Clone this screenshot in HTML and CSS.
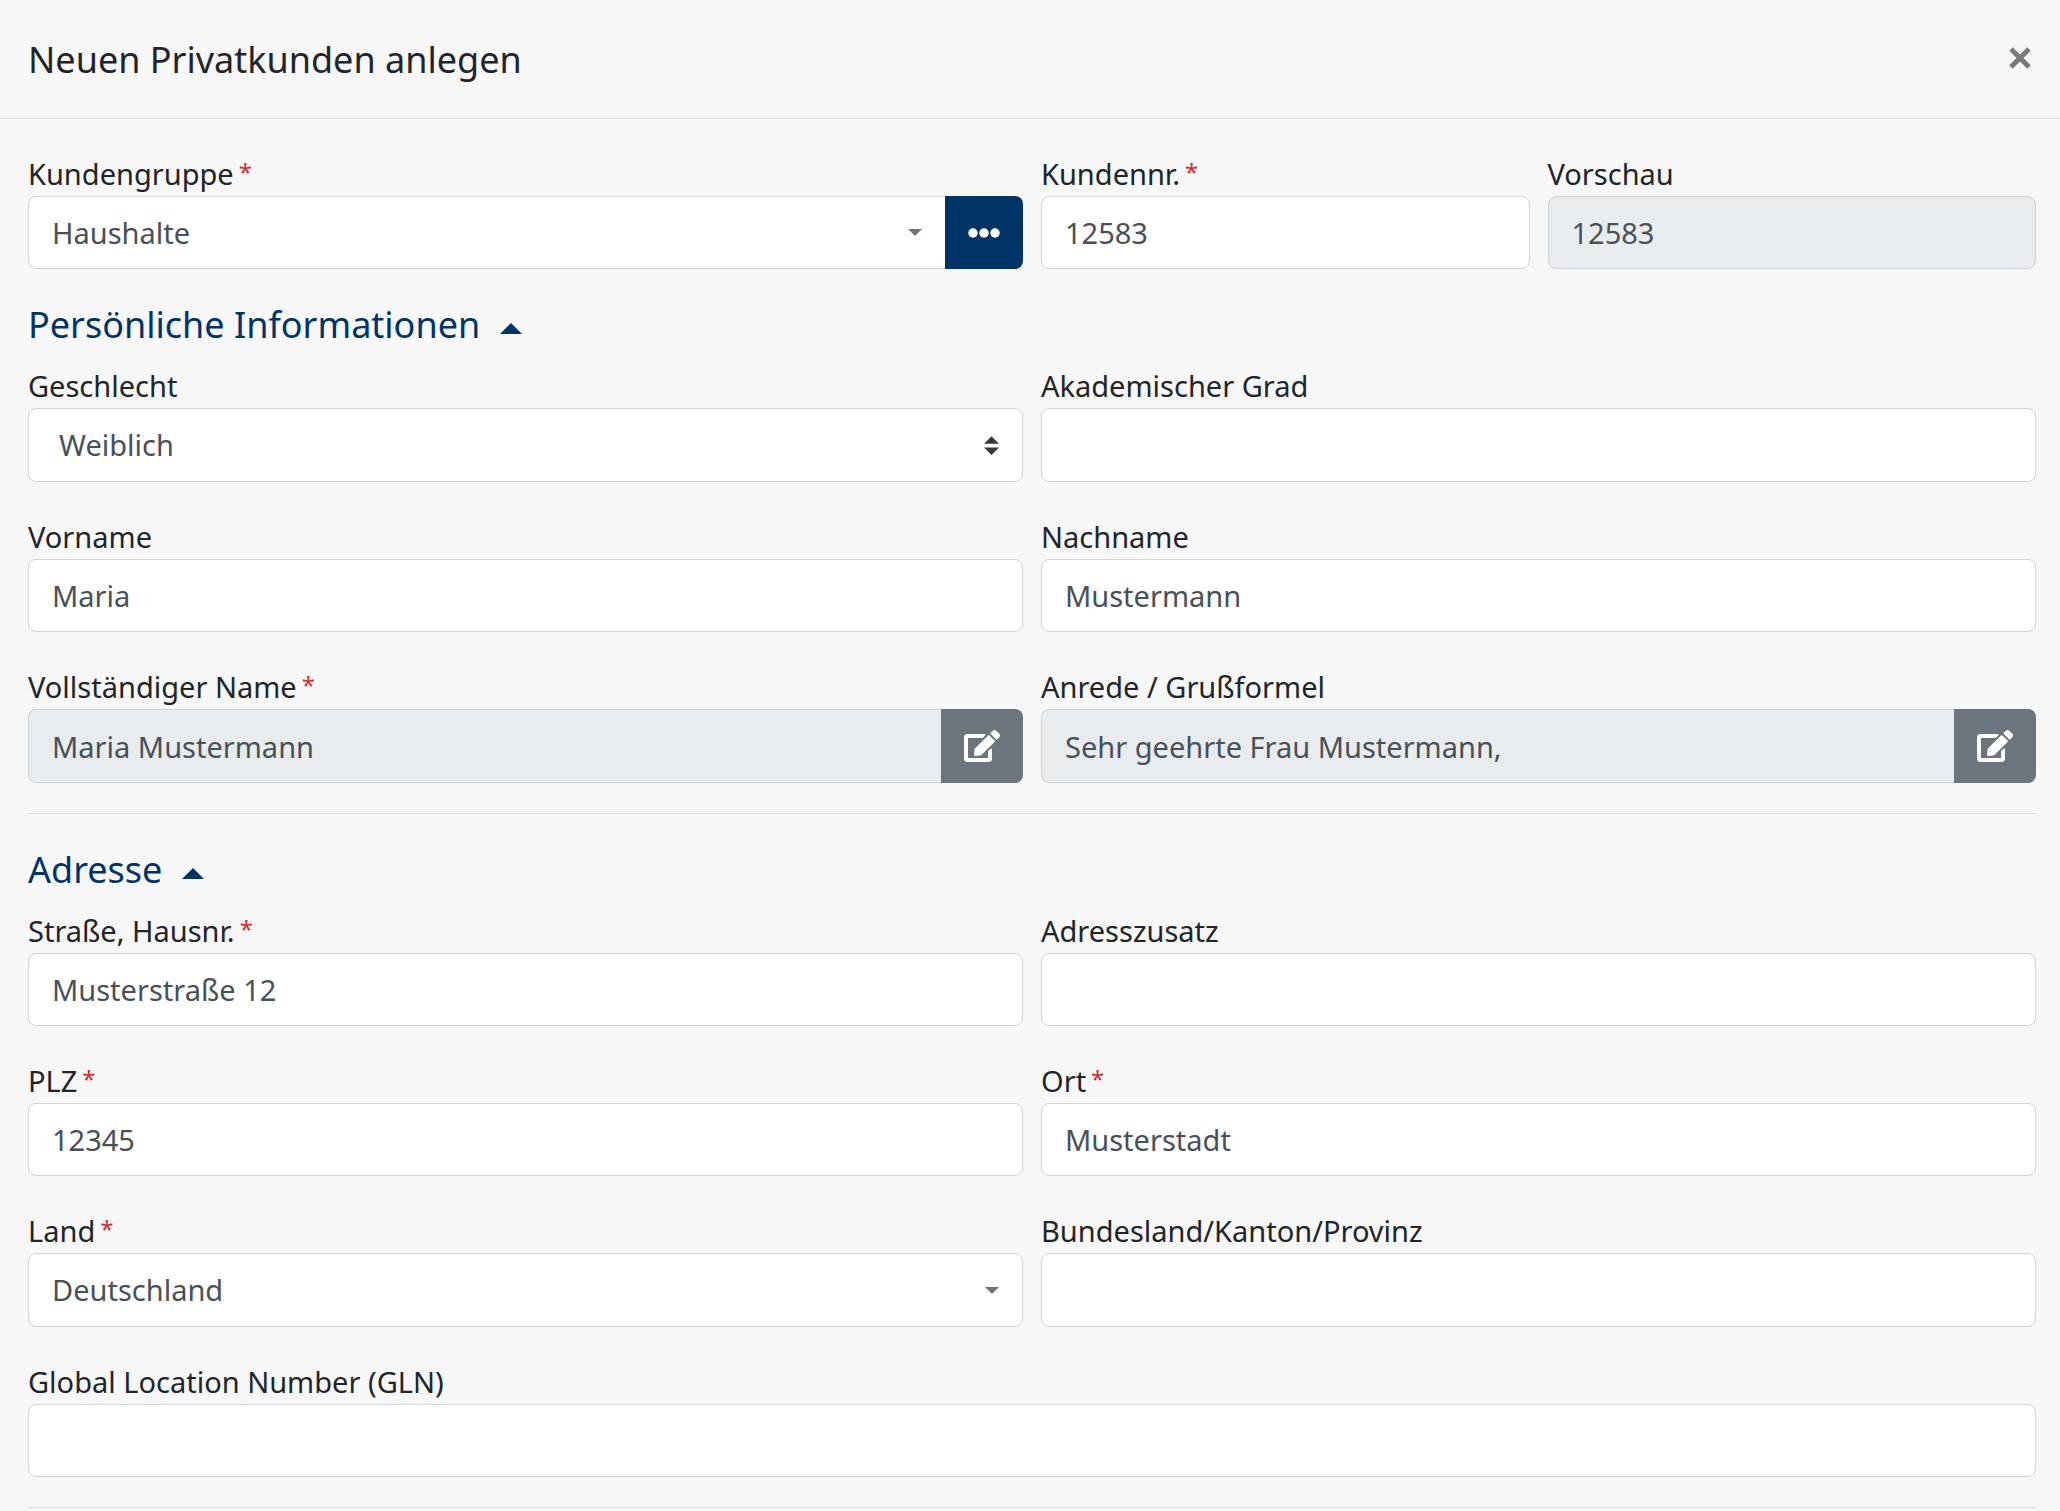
FILE: index.html
```html
<!DOCTYPE html>
<html lang="de">
<head>
  <meta charset="utf-8">
  <meta name="viewport" content="width=device-width, initial-scale=1">
  <title>Neuen Privatkunden anlegen</title>
  <link rel="stylesheet" href="styles.css">
</head>
<body>
  <svg class="sprite" aria-hidden="true">
    <symbol id="icon-edit" viewBox="0 0 576 512">
      <path d="M402.6 83.2l90.2 90.2c3.8 3.8 3.8 10 0 13.8L274.4 405.6l-92.8 10.3c-12.4 1.4-22.9-9.1-21.5-21.5l10.3-92.8L388.8 83.2c3.8-3.8 10-3.8 13.8 0zm162-22.9l-48.8-48.8c-15.2-15.2-39.9-15.2-55.2 0l-35.4 35.4c-3.8 3.8-3.8 10 0 13.8l90.2 90.2c3.8 3.8 10 3.8 13.8 0l35.4-35.4c15.2-15.3 15.2-40 0-55.2zM384 346.2V448H64V128h229.8c3.2 0 6.2-1.3 8.5-3.5l40-40c7.6-7.6 2.2-20.5-8.5-20.5H48C21.5 64 0 85.5 0 112v352c0 26.5 21.5 48 48 48h352c26.5 0 48-21.5 48-48V306.2c0-10.7-12.9-16-20.5-8.5l-40 40c-2.2 2.3-3.5 5.3-3.5 8.5z"/>
    </symbol>
    <symbol id="icon-dots" viewBox="0 0 512 512">
      <circle cx="80" cy="256" r="76"/><circle cx="256" cy="256" r="76"/><circle cx="432" cy="256" r="76"/>
    </symbol>
    <symbol id="icon-caret-up" viewBox="0 0 22 11">
      <path d="M11 0L22 11H0z"/>
    </symbol>
  </svg>

  <main class="dialog">
    <header class="dialog-header">
      <h1 class="dialog-title">Neuen Privatkunden anlegen</h1>
      <button class="close" type="button" aria-label="Schließen">
        <svg class="close-icon" viewBox="0 0 22 22"><path d="M2 2L20 20M20 2L2 20"/></svg>
      </button>
    </header>

    <form class="dialog-body">
      <div class="row">
        <div class="field">
          <label class="label" for="gruppe">Kundengruppe<span class="required">*</span></label>
          <div class="group">
            <select class="control picker" id="gruppe"><option>Haushalte</option></select>
            <button class="btn btn-primary" type="button" aria-label="Kundengruppe auswählen"><svg class="icon-dots"><use href="#icon-dots"/></svg></button>
          </div>
        </div>
        <div class="row row-nested">
          <div class="field">
            <label class="label" for="nr">Kundennr.<span class="required">*</span></label>
            <input class="control" id="nr" type="text" value="12583">
          </div>
          <div class="field">
            <label class="label" for="vorschau">Vorschau</label>
            <input class="control" id="vorschau" type="text" value="12583" readonly>
          </div>
        </div>
      </div>

      <section class="section">
        <h2 class="section-title"><button class="toggle" type="button" aria-expanded="true">Persönliche Informationen<svg class="icon-caret"><use href="#icon-caret-up"/></svg></button></h2>
        <div class="row row-tall">
          <div class="field">
            <label class="label" for="geschlecht">Geschlecht</label>
            <select class="control native" id="geschlecht"><option>Weiblich</option></select>
          </div>
          <div class="field">
            <label class="label" for="grad">Akademischer Grad</label>
            <input class="control" id="grad" type="text">
          </div>
        </div>
        <div class="row">
          <div class="field">
            <label class="label" for="vorname">Vorname</label>
            <input class="control" id="vorname" type="text" value="Maria">
          </div>
          <div class="field">
            <label class="label" for="nachname">Nachname</label>
            <input class="control" id="nachname" type="text" value="Mustermann">
          </div>
        </div>
        <div class="row row-tall">
          <div class="field">
            <label class="label" for="name">Vollständiger Name<span class="required">*</span></label>
            <div class="group">
              <input class="control" id="name" type="text" value="Maria Mustermann" readonly>
              <button class="btn btn-secondary" type="button" aria-label="Name bearbeiten"><svg class="icon-edit"><use href="#icon-edit"/></svg></button>
            </div>
          </div>
          <div class="field">
            <label class="label" for="anrede">Anrede / Grußformel</label>
            <div class="group">
              <input class="control" id="anrede" type="text" value="Sehr geehrte Frau Mustermann," readonly>
              <button class="btn btn-secondary" type="button" aria-label="Anrede bearbeiten"><svg class="icon-edit"><use href="#icon-edit"/></svg></button>
            </div>
          </div>
        </div>
      </section>
      <hr class="divider">

      <section class="section">
        <h2 class="section-title"><button class="toggle" type="button" aria-expanded="true">Adresse<svg class="icon-caret"><use href="#icon-caret-up"/></svg></button></h2>
        <div class="row">
          <div class="field">
            <label class="label" for="strasse">Straße, Hausnr.<span class="required">*</span></label>
            <input class="control" id="strasse" type="text" value="Musterstraße 12">
          </div>
          <div class="field">
            <label class="label" for="zusatz">Adresszusatz</label>
            <input class="control" id="zusatz" type="text">
          </div>
        </div>
        <div class="row">
          <div class="field">
            <label class="label" for="plz">PLZ<span class="required">*</span></label>
            <input class="control" id="plz" type="text" value="12345">
          </div>
          <div class="field">
            <label class="label" for="ort">Ort<span class="required">*</span></label>
            <input class="control" id="ort" type="text" value="Musterstadt">
          </div>
        </div>
        <div class="row row-tall">
          <div class="field">
            <label class="label" for="land">Land<span class="required">*</span></label>
            <select class="control picker" id="land"><option>Deutschland</option></select>
          </div>
          <div class="field">
            <label class="label" for="bundesland">Bundesland/Kanton/Provinz</label>
            <input class="control" id="bundesland" type="text">
          </div>
        </div>
        <div class="row row-single">
          <div class="field">
            <label class="label" for="gln">Global Location Number (GLN)</label>
            <input class="control" id="gln" type="text">
          </div>
        </div>
      </section>
      <hr class="divider divider-last">
    </form>
  </main>
</body>
</html>
```

FILE: styles.css
```css
*,
*::before,
*::after {
  box-sizing: border-box;
}

body {
  margin: 0;
  background: #f7f7f7;
  color: #212529;
  font-family: "Segoe UI", "Noto Sans", "Open Sans", sans-serif;
  font-size: 29px;
  line-height: 44px;
}

button,
input,
select {
  margin: 0;
  font: inherit;
}

button {
  cursor: pointer;
}

.sprite {
  display: none;
}

/* Header */
.dialog-header {
  display: flex;
  align-items: flex-start;
  justify-content: space-between;
  padding: 37px 29px 35px 28px;
  border-bottom: 1px solid #dee2e6;
}

.dialog-title {
  margin: 0;
  font-size: 36px;
  font-weight: 400;
  line-height: 46px;
}

.close {
  display: flex;
  padding: 10px 0;
  border: 0;
  background: none;
}

.close-icon {
  width: 22px;
  height: 22px;
  fill: none;
  stroke: #7b7b7b;
  stroke-width: 5;
}

/* Form grid */
.dialog-body {
  padding: 33px 24px 0 28px;
}

.row {
  display: grid;
  grid-template-columns: repeat(2, minmax(0, 1fr));
  gap: 18px;
  margin-bottom: 33px;
}

.row-nested {
  margin-bottom: 0;
}

.row-single {
  grid-template-columns: minmax(0, 1fr);
}

.section .row:last-child {
  margin-bottom: 30px;
}

.field {
  display: flex;
  flex-direction: column;
}

.required {
  margin-left: 5px;
  color: #d03035;
  font-size: 24px;
  line-height: 1;
  vertical-align: 4px;
}

.control {
  width: 100%;
  height: 73px;
  padding: 0 23px;
  border: 1px solid #ced4da;
  border-radius: 8px;
  background-color: #fff;
  color: #495057;
}

.row-tall .control {
  height: 74px;
}

.control:read-only:not(select) {
  background-color: #e8ecef;
}

select.control {
  appearance: none;
  background-repeat: no-repeat;
  background-position: right 23px center;
}

.picker {
  background-image: url("data:image/svg+xml,%3Csvg xmlns='http://www.w3.org/2000/svg' width='14' height='7' viewBox='0 0 14 7'%3E%3Cpath fill='%236c757d' d='M0 0h14L7 7z'/%3E%3C/svg%3E");
}

.native {
  padding-left: 30px;
  background-image: url("data:image/svg+xml,%3Csvg xmlns='http://www.w3.org/2000/svg' width='15' height='19' viewBox='0 0 4 5'%3E%3Cpath fill='%23343a40' d='M2 0L0 2h4zm0 5L0 3h4z'/%3E%3C/svg%3E");
}

.group {
  display: flex;
}

.group .control {
  flex: 1;
  min-width: 0;
  border-right: 0;
  border-radius: 8px 0 0 8px;
}

.btn {
  display: flex;
  align-items: center;
  justify-content: center;
  padding: 0 23px;
  border: 0;
  border-radius: 0 8px 8px 0;
  fill: #fff;
}

.btn-primary {
  background: #003366;
}

.btn-secondary {
  background: #6c757d;
}

.icon-dots {
  width: 32px;
  height: 32px;
}

.icon-edit {
  width: 36px;
  height: 32px;
}

/* Collapsible sections */
.section-title {
  margin: 0 0 16px;
  font-size: 36px;
  font-weight: 400;
  line-height: 46px;
}

.toggle {
  display: flex;
  align-items: center;
  gap: 20px;
  padding: 0;
  border: 0;
  background: none;
  color: #003366;
}

.icon-caret {
  width: 22px;
  height: 11px;
  margin-top: 6px;
  fill: #003366;
}

.divider {
  height: 1px;
  margin: 0 0 33px;
  border: 0;
  background: #dfdfe0;
}

.divider-last {
  margin-bottom: 0;
}
```
